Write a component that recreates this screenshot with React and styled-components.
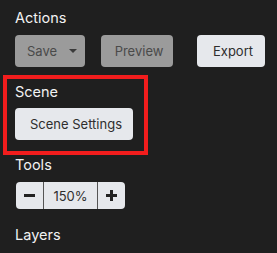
import React from "react";
import styled, { createGlobalStyle } from "styled-components";

const GlobalStyle = createGlobalStyle`
  html, body {
    margin: 0;
    padding: 0;
    background: #1f1f1f;
  }
  body {
    font-family: Inter, "Noto Sans", sans-serif;
  }
`;

const Panel = styled.div`
  width: 277px;
  height: 253px;
  box-sizing: border-box;
  padding: 9px 12px 0 15px;
  background: #1f1f1f;
  overflow: hidden;
`;

const Section = styled.div`
  display: flex;
  flex-direction: column;
  align-items: flex-start;
  margin-bottom: ${p => p.$gap || 0}px;
`;

// red box drawn round the selected section
const Highlight = styled.div`
  margin: 0 0 1px -12px;
  width: 145px;
  box-sizing: border-box;
  border: 4px solid #f21d1d;
  padding: 4px 0 11px 8px;
`;

const Heading = styled.h3`
  margin: 0 0 ${p => p.$gap || 8}px;
  font-size: 14.5px;
  line-height: 18px;
  font-weight: 400;
  color: #f2f2f2;
`;

const Row = styled.div`
  display: flex;
  gap: 16px;
  width: 100%;
`;

const Button = styled.button`
  width: ${p => p.$w}px;
  height: 32px;
  box-sizing: border-box;
  border: none;
  border-radius: 4px;
  padding: 0 8px 0 12px;
  font-family: inherit;
  font-size: 13px;
  display: inline-flex;
  align-items: center;
  justify-content: ${p => (p.$split ? "space-between" : "center")};
  background: ${p => (p.$disabled ? "#9b9b9b" : "#e6e8ec")};
  color: ${p => (p.$disabled ? "#4a4a4a" : "#2e2e2e")};
  margin-left: ${p => (p.$push ? "auto" : "0")};
`;

const Caret = styled.span`
  width: 0;
  height: 0;
  border-left: 4px solid transparent;
  border-right: 4px solid transparent;
  border-top: 4px solid #3a3a3a;
`;

const Stepper = styled.div`
  display: flex;
  height: 27px;
  margin-left: 1px;
  background: #e6e8ec;
  border-radius: 4px;
  overflow: hidden;
`;

const StepButton = styled.button`
  width: 28px;
  height: 27px;
  border: none;
  padding: 0;
  background: transparent;
  display: flex;
  align-items: center;
  justify-content: center;
  ${p => (p.$left ? "border-right: 1px solid #555;" : "border-left: 1px solid #555;")}
`;

const Value = styled.div`
  width: 53px;
  display: flex;
  align-items: center;
  justify-content: center;
  font-size: 13px;
  color: #2e2e2e;
`;

const Minus = () => (
  <svg width="11" height="11" viewBox="0 0 11 11">
    <rect x="0" y="4" width="11" height="3" fill="#222" />
  </svg>
);

const Plus = () => (
  <svg width="11" height="11" viewBox="0 0 11 11">
    <rect x="0" y="4" width="11" height="3" fill="#222" />
    <rect x="4" y="0" width="3" height="11" fill="#222" />
  </svg>
);

export default function App() {
  return (
    <>
      <GlobalStyle />
      <Panel>
        <Section $gap={8}>
          <Heading>Actions</Heading>
          <Row>
            <Button $disabled $split $w={70}>
              Save <Caret />
            </Button>
            <Button $disabled $w={72}>Preview</Button>
            <Button $push $w={68}>Export</Button>
          </Row>
        </Section>
        <Highlight>
          <Heading $gap={7}>Scene</Heading>
          <Button $w={118}>Scene Settings</Button>
        </Highlight>
        <Section $gap={17}>
          <Heading>Tools</Heading>
          <Stepper>
            <StepButton $left><Minus /></StepButton>
            <Value>150%</Value>
            <StepButton><Plus /></StepButton>
          </Stepper>
        </Section>
        <Section>
          <Heading>Layers</Heading>
        </Section>
      </Panel>
    </>
  );
}
